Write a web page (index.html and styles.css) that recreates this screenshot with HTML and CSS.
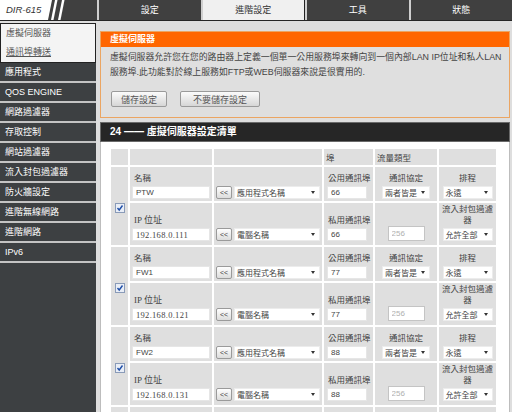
FILE: index.html
```html
<!DOCTYPE html>
<html>
<head>
   <meta http-equiv="Content-Type" content="text/html; charset=UTF-8" />
   <link rel="stylesheet" href="styles.css">
</head>
<body>

<div id="top">
    <div class="logo">
        <span class="brand">DIR-615</span>
        <svg width="18" height="20" viewBox="0 0 18 20">
            <polygon points="0,0 4,0 0,20" fill="#fff"/>
            <polygon points="7,0 9.5,0 5.5,20 3,20" fill="#fff"/>
            <polygon points="14,0 16.5,0 12.5,20 10,20" fill="#fff"/>
        </svg>
    </div>
    <div class="tabs">
        <div class="tab">設定</div>
        <div class="tab on">進階設定</div>
        <div class="tab">工具</div>
        <div class="tab">狀態</div>
    </div>
</div>

<div class="page">
    <div class="side">
        <div class="sub">
            <a href="#">虛擬伺服器</a>
            <a href="#" class="u">通訊埠轉送</a>
        </div>
        <ul class="menu">
            <li>應用程式</li>
            <li>QOS ENGINE</li>
            <li>網路過濾器</li>
            <li>存取控制</li>
            <li>網站過濾器</li>
            <li>流入封包過濾器</li>
            <li>防火牆設定</li>
            <li>進階無線網路</li>
            <li>進階網路</li>
            <li>IPv6</li>
        </ul>
    </div>

    <div class="main">
        <div class="box">
            <h2>虛擬伺服器</h2>
            <div class="desc">
                <p>虛擬伺服器允許您在您的路由器上定義一個單一公用服務埠來轉向到一個內部LAN IP位址和私人LAN<br>服務埠.此功能對於線上服務如FTP或WEB伺服器來說是很實用的.</p>
                <div class="btns">
                    <button class="btn save">儲存設定</button>
                    <button class="btn nosave">不要儲存設定</button>
                </div>
            </div>
        </div>

        <div class="list">
            <h3>24 —— 虛擬伺服器設定清單</h3>
            <div class="list-body">
                <table>
                    <colgroup>
                        <col class="c-chk"><col class="c-name"><col class="c-mid">
                        <col class="c-port"><col class="c-type"><col class="c-sch">
                    </colgroup>
                    <tr class="head">
                        <td></td><td></td><td></td>
                        <td>埠</td><td>流量類型</td><td></td>
                    </tr>

                    <tr class="a">
                        <td class="chk" rowspan="2"><span class="check"><svg width="8" height="8" viewBox="0 0 8 8"><path d="M1.5 4 L3.2 6 L6.5 1.5" fill="none" stroke="#1f4fa8" stroke-width="1.4"/></svg></span></td>
                        <td><span class="lbl">名稱</span><input class="field" value="PTW"></td>
                        <td><div class="pickrow"><span class="pick">&lt;&lt;</span><span class="sel">應用程式名稱</span></div></td>
                        <td><span class="lbl">公用通訊埠</span><input class="field port" value="66"></td>
                        <td class="ctr"><span class="lbl">通訊協定</span><span class="sel proto">兩者皆是</span></td>
                        <td class="ctr"><span class="lbl">排程</span><span class="sel sch">永遠</span></td>
                    </tr>
                    <tr class="b">
                        <td><span class="lbl ip">IP 位址</span><input class="field ipf" value="192.168.0.111"></td>
                        <td><div class="pickrow"><span class="pick">&lt;&lt;</span><span class="sel">電腦名稱</span></div></td>
                        <td><span class="lbl">私用通訊埠</span><input class="field port" value="66"></td>
                        <td class="ctr dis"><input class="field off" value="256" disabled></td>
                        <td class="ctr"><span class="lbl">流入封包過濾器</span><span class="sel sch">允許全部</span></td>
                    </tr>

                    <tr class="a">
                        <td class="chk" rowspan="2"><span class="check"><svg width="8" height="8" viewBox="0 0 8 8"><path d="M1.5 4 L3.2 6 L6.5 1.5" fill="none" stroke="#1f4fa8" stroke-width="1.4"/></svg></span></td>
                        <td><span class="lbl">名稱</span><input class="field" value="FW1"></td>
                        <td><div class="pickrow"><span class="pick">&lt;&lt;</span><span class="sel">應用程式名稱</span></div></td>
                        <td><span class="lbl">公用通訊埠</span><input class="field port" value="77"></td>
                        <td class="ctr"><span class="lbl">通訊協定</span><span class="sel proto">兩者皆是</span></td>
                        <td class="ctr"><span class="lbl">排程</span><span class="sel sch">永遠</span></td>
                    </tr>
                    <tr class="b">
                        <td><span class="lbl ip">IP 位址</span><input class="field ipf" value="192.168.0.121"></td>
                        <td><div class="pickrow"><span class="pick">&lt;&lt;</span><span class="sel">電腦名稱</span></div></td>
                        <td><span class="lbl">私用通訊埠</span><input class="field port" value="77"></td>
                        <td class="ctr dis"><input class="field off" value="256" disabled></td>
                        <td class="ctr"><span class="lbl">流入封包過濾器</span><span class="sel sch">允許全部</span></td>
                    </tr>

                    <tr class="a">
                        <td class="chk" rowspan="2"><span class="check"><svg width="8" height="8" viewBox="0 0 8 8"><path d="M1.5 4 L3.2 6 L6.5 1.5" fill="none" stroke="#1f4fa8" stroke-width="1.4"/></svg></span></td>
                        <td><span class="lbl">名稱</span><input class="field" value="FW2"></td>
                        <td><div class="pickrow"><span class="pick">&lt;&lt;</span><span class="sel">應用程式名稱</span></div></td>
                        <td><span class="lbl">公用通訊埠</span><input class="field port" value="88"></td>
                        <td class="ctr"><span class="lbl">通訊協定</span><span class="sel proto">兩者皆是</span></td>
                        <td class="ctr"><span class="lbl">排程</span><span class="sel sch">永遠</span></td>
                    </tr>
                    <tr class="b">
                        <td><span class="lbl ip">IP 位址</span><input class="field ipf" value="192.168.0.131"></td>
                        <td><div class="pickrow"><span class="pick">&lt;&lt;</span><span class="sel">電腦名稱</span></div></td>
                        <td><span class="lbl">私用通訊埠</span><input class="field port" value="88"></td>
                        <td class="ctr dis"><input class="field off" value="256" disabled></td>
                        <td class="ctr"><span class="lbl">流入封包過濾器</span><span class="sel sch">允許全部</span></td>
                    </tr>

                    <tr class="a">
                        <td></td><td></td><td></td><td></td><td></td><td></td>
                    </tr>
                </table>
            </div>
        </div>
    </div>
</div>

</body>
</html>
```

FILE: styles.css
```css
* {
    padding: 0; margin: 0;
    box-sizing: border-box;
}
html, body {
    height: 100%;
    overflow: hidden;
}
body {
    background: #dedede;
    font-family: "Liberation Sans", "Noto Sans CJK TC", sans-serif;
    font-size: 9px;
    color: #333;
}

/* top bar */
#top {
    display: flex;
    height: 21px;
    background: #404040;
    border-bottom: 1px solid #262626;
}
.logo {
    display: flex;
    width: 97px;
    height: 20px;
}
.brand {
    width: 48px;
    background: #fff;
    color: #333;
    font-style: italic;
    font-size: 9.5px;
    line-height: 20px;
    padding-left: 6px;
}
.tabs {
    display: flex;
    flex: 1;
}
.tab {
    flex: 1;
    border-left: 2px solid #cfcfcf;
    color: #fff;
    text-align: center;
    line-height: 20px;
}
.tab.on {
    background: #f0f0f0;
    color: #333;
    border-right: 1px solid #222;
}

/* layout */
.page {
    display: flex;
    margin-top: 2px;
    height: 389px;
}
.side {
    width: 96px;
    background: #3d4042;
}
.sub {
    background: #f4f4f4;
    border: 1px solid #222;
}
.sub a {
    display: block;
    line-height: 19px;
    padding-left: 5px;
    color: #555;
    text-decoration: none;
}
.sub a.u {
    text-decoration: underline;
}
.menu {
    list-style: none;
}
.menu li {
    height: 20px;
    line-height: 18px;
    border-bottom: 2px solid #c4c4c4;
    color: #fff;
    padding-left: 5px;
}

.main {
    width: 410px;
    margin-left: 4px;
}

/* intro box */
.box {
    margin-top: 8px;
    border: 1px solid #eba562;
}
.box h2 {
    background: #ff6600;
    color: #fff;
    font-size: 9px;
    height: 15px;
    line-height: 15px;
    padding-left: 9px;
}
.desc {
    background: #dfdfdf;
    padding: 3px 9px 10px 9px;
}
.desc p {
    font-size: 8.9px;
    line-height: 15px;
    white-space: nowrap;
    color: #444;
}
.btns {
    display: flex;
    gap: 13px;
    margin-top: 11px;
    padding-left: 1px;
}
.btn {
    height: 16px;
    border: 1px solid #9a9a9a;
    border-radius: 2px;
    background: linear-gradient(#fbfbfb, #d6d6d6);
    font: inherit;
    color: #555;
}
.btn.save { width: 56px; }
.btn.nosave { width: 80px; }

/* rules list */
.list {
    margin-top: 4px;
}
.list h3 {
    height: 20px;
    background: #262626;
    border: 1px solid #6a6a6a;
    color: #fff;
    font-size: 10px;
    line-height: 18px;
    padding-left: 9px;
}
.list-body {
    background: #fff;
    border: 1px solid #bdbdbd;
    border-top: 0;
    height: 300px;
    padding: 5px 0 0 8px;
}
table {
    border-spacing: 2px;
    table-layout: fixed;
    width: 389px;
}
col.c-chk { width: 17px; }
col.c-name { width: 82px; }
col.c-mid { width: 108px; }
col.c-port { width: 49px; }
col.c-type { width: 62px; }
col.c-sch { width: 57px; }

td {
    background: #dfdfdf;
    padding: 0 2px 2px;
    vertical-align: bottom;
    font-size: 8.5px;
    color: #444;
}
tr.head td {
    height: 16px;
    vertical-align: middle;
    padding: 0 2px;
}
tr.a { height: 34px; }
tr.b { height: 42px; }
tr.b td { padding-bottom: 4px; }
td.ctr { text-align: center; }
td.chk {
    vertical-align: middle;
    text-align: center;
    padding: 6px 0 0;
}
td.dis { padding-bottom: 8px; }

.check {
    display: inline-block;
    width: 10px;
    height: 10px;
    border: 1px solid #8a9bb8;
    background: #e9eef7;
}
.check svg { display: block; }

.lbl {
    display: block;
    line-height: 11px;
    padding-left: 2px;
    margin-bottom: 2px;
}
td.ctr .lbl { padding-left: 0; }
.lbl.ip {
    font-family: "Liberation Serif", "Noto Sans CJK TC", serif;
    font-size: 9px;
}
.field {
    display: block;
    width: 78px;
    height: 13px;
    border: 1px solid #e6e6e6;
    background: #fff;
    font-family: "Liberation Sans", sans-serif;
    font-size: 8px;
    color: #444;
    padding-left: 3px;
}
.field.ipf {
    font-family: "Liberation Serif", serif;
    font-size: 8.5px;
    letter-spacing: 0.3px;
}
.field.port {
    width: 40px;
    margin-left: 1px;
}
.field.off {
    width: 37px;
    height: 15px;
    margin: 0 auto;
    border: 1px solid #c4c4c4;
    color: #b0b0b0;
    background: #fff;
}

.pickrow {
    display: flex;
    align-items: center;
    gap: 2px;
}
.pick {
    width: 16px;
    height: 13px;
    border: 1px solid #9a9a9a;
    border-radius: 2px;
    background: linear-gradient(#fff, #dcdcdc);
    font-size: 7px;
    line-height: 11px;
    text-align: center;
    color: #444;
}
.sel {
    display: flex;
    justify-content: space-between;
    align-items: center;
    height: 13px;
    background: #fff;
    border: 1px solid #ececec;
    padding: 0 4px 0 2px;
    font-size: 8px;
    color: #444;
    text-align: left;
}
.sel::after {
    content: "";
    border-top: 3px solid #333;
    border-left: 2.5px solid transparent;
    border-right: 2.5px solid transparent;
}
.pickrow .sel { flex: 1; }
.sel.proto {
    width: 48px;
    margin: 0 auto;
}
.sel.sch {
    width: 50px;
    margin: 0 auto;
}
```
